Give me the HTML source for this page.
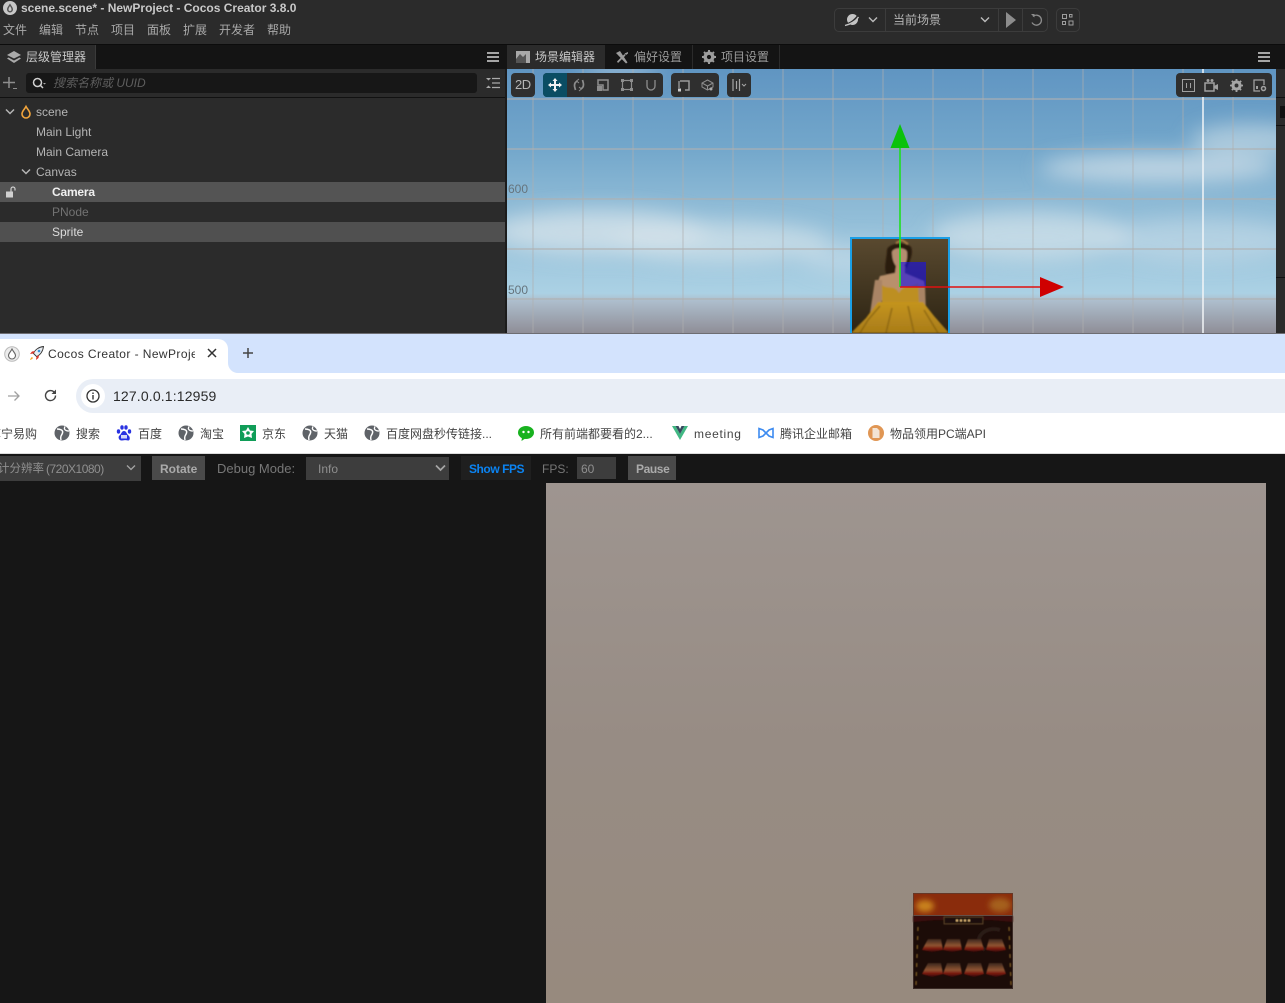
<!DOCTYPE html>
<html><head><meta charset="utf-8"><title>Cocos Creator</title>
<style>
*{box-sizing:border-box}
html,body{margin:0;padding:0;width:1285px;height:1003px;overflow:hidden;background:#161616}
body{position:relative;font-family:"Liberation Sans","Noto Sans CJK SC",sans-serif;font-size:12px}
.a{position:absolute}
.t{position:absolute;white-space:nowrap;line-height:16px}
svg{position:absolute;overflow:visible}
svg.clip{overflow:hidden}
.m{color:#a8a8a8;top:22px}
.r{color:#b5b5b5;left:36px}
.b{color:#444;top:426px;font-size:12px;letter-spacing:0}
.tb{position:absolute;top:73px;height:24px;background:#2f2f2f;border-radius:4px}
</style></head><body>

<!-- editor -->
<div class="a" style="left:0;top:0;width:1285px;height:44px;background:#2b2b2b"></div>
<div class="a" style="left:0;top:44px;width:1285px;height:1px;background:#0c0c0c"></div>
<svg style="left:3px;top:1px" width="14" height="14" viewBox="0 0 14 14"><circle cx="7" cy="7" r="7" fill="#c8c8c8"/><path d="M7 2.500C5.500 5 4 6.500 4 8.500a3 3 0 0 0 6 0C10 6.500 8.500 5 7 2.500z" fill="#555"/><path d="M7 5C6.200 6.500 5.500 7.300 5.500 8.500a1.500 1.500 0 0 0 3 0C8.500 7.300 7.800 6.500 7 5z" fill="#ccc"/></svg>
<div class="t" style="left:21px;top:0;color:#c9c9c9;font-weight:bold">scene.scene* - NewProject - Cocos Creator 3.8.0</div>
<div class="t m" style="left:3px">文件</div><div class="t m" style="left:39px">编辑</div><div class="t m" style="left:75px">节点</div><div class="t m" style="left:111px">项目</div><div class="t m" style="left:147px">面板</div><div class="t m" style="left:183px">扩展</div><div class="t m" style="left:219px">开发者</div><div class="t m" style="left:267px">帮助</div>

<!-- top center toolbar -->
<div class="a" style="left:834px;top:8px;width:214px;height:24px;border:1px solid #3c3c3c;border-radius:5px;background:#2a2a2a"></div>
<div class="a" style="left:885px;top:9px;width:1px;height:22px;background:#3c3c3c"></div>
<div class="a" style="left:998px;top:9px;width:1px;height:22px;background:#3c3c3c"></div>
<div class="a" style="left:1022px;top:9px;width:1px;height:22px;background:#3c3c3c"></div>
<div class="a" style="left:1056px;top:8px;width:24px;height:24px;border:1px solid #3c3c3c;border-radius:5px"></div>
<svg style="left:844px;top:12px" width="16" height="16" viewBox="0 0 16 16"><circle cx="8.500" cy="7.500" r="5.500" fill="#c4c4c4"/><path d="M1 13C6 12 12 8 15 2.500" stroke="#2a2a2a" stroke-width="2.400" fill="none"/><path d="M1 13.500C6 12.500 12 9 14.500 5" stroke="#c4c4c4" stroke-width="1.400" fill="none"/></svg>
<svg style="left:868px;top:16px" width="10" height="8" viewBox="0 0 10 8"><path d="M1 1.500L5 5.500L9 1.500" stroke="#bbb" stroke-width="1.400" fill="none"/></svg>
<div class="t" style="left:893px;top:12px;color:#b5b5b5">当前场景</div>
<svg style="left:980px;top:16px" width="10" height="8" viewBox="0 0 10 8"><path d="M1 1.500L5 5.500L9 1.500" stroke="#bbb" stroke-width="1.400" fill="none"/></svg>
<svg style="left:1005px;top:12px" width="12" height="16" viewBox="0 0 12 16"><path d="M1 0L11 8L1 16z" fill="#8c8c8c"/></svg>
<svg style="left:1029px;top:13px" width="14" height="14" viewBox="0 0 14 14"><path d="M4 3.500A5 5 0 1 1 3 9.500" stroke="#8c8c8c" stroke-width="1.300" fill="none"/><path d="M2 1L5.500 1L5.500 4.500z" fill="#8c8c8c"/></svg>
<svg style="left:1062px;top:14px" width="12" height="12" viewBox="0 0 12 12" fill="none" stroke="#9c9c9c"><rect x=".5" y=".5" width="4" height="4"/><rect x="7.500" y=".5" width="2.500" height="2.500"/><rect x=".5" y="7.500" width="3" height="3"/><rect x="7" y="7" width="4" height="4"/></svg>

<!-- hierarchy -->
<div class="a" style="left:0;top:45px;width:505px;height:288px;background:#2b2b2b"></div>
<div class="a" style="left:0;top:45px;width:505px;height:24px;background:#141414"></div>
<div class="a" style="left:0;top:45px;width:96px;height:24px;background:#2b2b2b;border-right:1px solid #3a3a3a"></div>
<svg style="left:7px;top:50px" width="14" height="14" viewBox="0 0 14 14"><path d="M7 1L14 5L7 8.500L0 5z" fill="#aaa"/><path d="M1.500 7.500L0 8.500L7 13L14 8.500L12.500 7.500L7 10.500z" fill="#aaa"/></svg>
<div class="t" style="left:26px;top:49px;color:#c6c6c6">层级管理器</div>
<div class="a" style="left:487px;top:52px;width:12px;height:10px;border-top:2px solid #a5a5a5;border-bottom:2px solid #a5a5a5"></div>
<div class="a" style="left:487px;top:56px;width:12px;height:2px;background:#a5a5a5"></div>
<div class="a" style="left:0;top:97px;width:505px;height:1px;background:#111"></div>
<svg style="left:3px;top:76px" width="14" height="14" viewBox="0 0 14 14"><path d="M6 1v11M0 6.500h12" stroke="#8e8e8e" stroke-width="1.500" fill="none"/><path d="M10 13h4v-1h-4z" fill="#8e8e8e"/></svg>
<div class="a" style="left:26px;top:73px;width:451px;height:20px;background:#171717;border-radius:3px"></div>
<svg style="left:32px;top:77px" width="14" height="12" viewBox="0 0 14 12"><circle cx="5.500" cy="5.500" r="4" stroke="#d0d0d0" stroke-width="1.500" fill="none"/><path d="M8.500 8.500L11 11" stroke="#d0d0d0" stroke-width="1.500"/><path d="M11 6h3l-1.500 1.500z" fill="#aaa"/></svg>
<div class="t" style="left:53px;top:75px;color:#5e5e5e;font-style:italic">搜索名称或 UUID</div>
<svg style="left:486px;top:77px" width="14" height="12" viewBox="0 0 14 12"><path d="M0 1h5L2.500 3.500zM0 11h5L2.500 8.500z" fill="#aaa"/><path d="M6 1.500h8M6 6h8M6 10.500h8" stroke="#aaa" stroke-width="1.200"/></svg>

<svg style="left:5px;top:108px" width="10" height="8" viewBox="0 0 10 8"><path d="M1 1.500L5 5.500L9 1.500" stroke="#b5b5b5" stroke-width="1.500" fill="none"/></svg>
<svg style="left:20px;top:105px" width="12" height="14" viewBox="0 0 12 14"><path d="M6 1.500C4.500 4.500 2 6 2 9a4 4 0 0 0 8 0C10 6 7.500 4.500 6 1.500z" stroke="#f2a53c" stroke-width="1.600" fill="none"/></svg>
<div class="t r" style="top:104px">scene</div>
<div class="t r" style="top:124px">Main Light</div>
<div class="t r" style="top:144px">Main Camera</div>
<svg style="left:21px;top:168px" width="10" height="8" viewBox="0 0 10 8"><path d="M1 1.500L5 5.500L9 1.500" stroke="#b5b5b5" stroke-width="1.500" fill="none"/></svg>
<div class="t r" style="top:164px">Canvas</div>
<div class="a" style="left:0;top:182px;width:505px;height:20px;background:#545454"></div>
<svg style="left:5px;top:186px" width="12" height="12" viewBox="0 0 12 12"><rect x="1" y="5.500" width="7" height="6" fill="#d0d0d0"/><path d="M6 5.500V3a2 2 0 0 1 4 0v1.500" stroke="#d0d0d0" stroke-width="1.200" fill="none"/></svg>
<div class="t" style="left:52px;top:184px;color:#f0f0f0;font-weight:bold;letter-spacing:-.2px">Camera</div>
<div class="t" style="left:52px;top:204px;color:#727272">PNode</div>
<div class="a" style="left:0;top:222px;width:505px;height:20px;background:#505050"></div>
<div class="t" style="left:52px;top:224px;color:#dcdcdc">Sprite</div>

<!-- scene right -->
<div class="a" style="left:505px;top:45px;width:780px;height:24px;background:#141414"></div>
<div class="a" style="left:507px;top:45px;width:98px;height:24px;background:#2b2b2b"></div>
<div class="a" style="left:692px;top:45px;width:1px;height:24px;background:#2b2b2b"></div>
<div class="a" style="left:779px;top:45px;width:1px;height:24px;background:#2b2b2b"></div>
<svg style="left:516px;top:51px" width="14" height="12" viewBox="0 0 14 12"><rect width="14" height="12" fill="#a8a8a8"/><path d="M0 8L4 3L7 6L10 3V12H0z" fill="#555"/></svg>
<div class="t" style="left:535px;top:49px;color:#c8c8c8">场景编辑器</div>
<svg style="left:615px;top:50px" width="14" height="14" viewBox="0 0 14 14"><path d="M1 3L5 1L12.500 12.500L11 13.500z" fill="#9c9c9c"/><path d="M13 2L9.500 3.500L11 5L13 3.500M9.500 4L2 11.500L3 13L10.500 5.500" fill="#9c9c9c"/></svg>
<div class="t" style="left:634px;top:49px;color:#9c9c9c">偏好设置</div>
<svg style="left:702px;top:50px" width="14" height="14" viewBox="0 0 14 14"><circle cx="7" cy="7" r="3.800" fill="none" stroke="#9c9c9c" stroke-width="3.400"/><path d="M7 0v14M0 7h14M2 2l10 10M12 2L2 12" stroke="#9c9c9c" stroke-width="2" stroke-dasharray="2 10"/></svg>
<div class="t" style="left:721px;top:49px;color:#9c9c9c">项目设置</div>
<div class="a" style="left:1258px;top:52px;width:12px;height:10px;border-top:2px solid #a5a5a5;border-bottom:2px solid #a5a5a5"></div>
<div class="a" style="left:1258px;top:56px;width:12px;height:2px;background:#a5a5a5"></div>

<!-- viewport -->
<svg class="clip" style="left:507px;top:69px" width="769" height="264" viewBox="507 69 769 264">
<defs>
<linearGradient id="sky" x1="0" y1="0" x2="0" y2="1"><stop offset="0" stop-color="#6095c2"/><stop offset=".3" stop-color="#73a7cb"/><stop offset=".5" stop-color="#8cb9d5"/><stop offset=".85" stop-color="#abd1e4"/><stop offset=".875" stop-color="#aebfce"/><stop offset="1" stop-color="#8f8e97"/></linearGradient>
<filter id="bl" x="-30%" y="-80%" width="160%" height="260%"><feGaussianBlur stdDeviation="10"/></filter>
<filter id="soft"><feGaussianBlur stdDeviation=".7"/></filter>
<linearGradient id="sk" x1="0" y1="0" x2="0" y2="1"><stop offset="0" stop-color="#5a4a30"/><stop offset="1" stop-color="#2d2413"/></linearGradient>
<linearGradient id="dr" x1="0" y1="0" x2="0" y2="1"><stop offset="0" stop-color="#c4941e"/><stop offset="1" stop-color="#a97c18"/></linearGradient>
</defs>
<rect x="507" y="69" width="769" height="264" fill="url(#sky)"/>
<g filter="url(#bl)" fill="#d4e2ea">
<ellipse cx="600" cy="232" rx="110" ry="22" opacity=".8"/>
<ellipse cx="720" cy="242" rx="110" ry="20" opacity=".7"/>
<ellipse cx="1160" cy="168" rx="120" ry="14" opacity=".75"/>
<ellipse cx="1250" cy="140" rx="60" ry="16" opacity=".6"/>
<ellipse cx="1030" cy="236" rx="100" ry="24" opacity=".7"/>
<ellipse cx="1200" cy="240" rx="100" ry="22" opacity=".45"/>
<ellipse cx="860" cy="258" rx="60" ry="16" opacity=".45"/>
<ellipse cx="620" cy="70" rx="40" ry="6" opacity=".7"/>
</g>
<g stroke="#b0b0b0">
<path d="M533 69V333M583 69V333M633 69V333M683 69V333M733 69V333M783 69V333M833 69V333M883 69V333M933 69V333M983 69V333M1033 69V333M1083 69V333M1133 69V333M1183 69V333M1233 69V333" stroke-opacity=".5" stroke-width="1.400"/>
<path d="M507 99H1276M507 149H1276M507 199H1276M507 249H1276M507 299H1276" stroke-width="1.500" stroke-opacity=".75"/>
</g>
<path d="M1203 69V333" stroke="#f2f5f7" stroke-width="1.500"/>

<!-- portrait -->
<rect x="850" y="237" width="100" height="96" fill="url(#sk)"/>
<g filter="url(#soft)">
<path d="M887 250C888 243 906 241 911 247C914 254 909 262 907 268H897C898 275 893 281 887 276C883 268 887 258 887 250z" fill="#2a1a10"/>
<path d="M892 252C893 247 906 247 907 252C908 262 904 268 900 268C896 268 892 262 892 252z" fill="#b48e70"/>
<path d="M896 266H905V273L924 281L925 288H915L912 296H890L884 288L875 290L880 276L895 273z" fill="#b8906c"/>
<path d="M875 280L882 280L882 300L876 320L869 320z" fill="#a98465"/>
<path d="M916 285L925 285L926 314L916 326L909 322L916 312z" fill="#a98465"/>
<path d="M882 285C888 290 894 284 899 293C904 284 910 288 918 283L919 303H882z" fill="#bd8f22"/>
<path d="M878 302H923L934 316L949 333H851L866 318z" fill="url(#dr)"/>
<path d="M880 306L868 320L860 333M892 308L886 333M908 306L914 333M924 310L938 333" stroke="#84600f" stroke-width="1.600" fill="none" opacity=".75"/>
<path d="M896 243L902 240L908 244" stroke="#a77c44" stroke-width="2" fill="none"/>
</g>
<path d="M851 333V238H949V333" fill="none" stroke="#1a9fe6" stroke-width="2"/>

<!-- gizmos -->
<rect x="900" y="262" width="26" height="25" fill="#1a10e6" opacity=".62"/>
<path d="M900 148V287" stroke="#1fe01f" stroke-width="1.600"/>
<path d="M900 124L909.500 148H890.500z" fill="#0cc20c"/>
<path d="M900 287H1042" stroke="#e01010" stroke-width="1.600"/>
<path d="M1040 277L1064 287L1040 297z" fill="#cf0000"/>
</svg>
<div class="t" style="left:508px;top:181px;color:#66747d">600</div>
<div class="t" style="left:508px;top:282px;color:#66747d">500</div>

<!-- viewport toolbar -->
<div class="tb" style="left:511px;width:24px"></div>
<div class="t" style="left:515px;top:77px;color:#b5b5b5;font-size:13px;letter-spacing:-.5px">2D</div>
<div class="tb" style="left:543px;width:120px"></div>
<div class="a" style="left:543px;top:73px;width:24px;height:24px;background:#0a4d63;border-radius:4px 0 0 4px"></div>
<svg style="left:548px;top:78px" width="14" height="14" viewBox="0 0 14 14"><path d="M7 0L9.500 3H8V6H11V4.500L14 7L11 9.500V8H8V11H9.500L7 14L4.500 11H6V8H3V9.500L0 7L3 4.500V6H6V3H4.500z" fill="#f2f2f2"/></svg>
<svg style="left:572px;top:78px" width="14" height="14" viewBox="0 0 14 14" fill="none" stroke="#8d8d8d" stroke-width="1.700"><path d="M5.500 3C3 4 2.500 6 2.500 7.500S3 10 3.500 12"/><path d="M8.500 11C11 10 11.500 8 11.500 6.500S11 4 10.500 2"/><path d="M7 1L4.500 3L7 5M7 9L9.500 11L7 13" stroke-width="1"/></svg>
<svg style="left:597px;top:79px" width="12" height="12" viewBox="0 0 12 12"><path d="M1 1H11V11H6V6H1z" fill="none" stroke="#8d8d8d" stroke-width="1.500"/><rect x="0" y="7" width="5" height="5" fill="#8d8d8d"/></svg>
<svg style="left:621px;top:79px" width="12" height="12" viewBox="0 0 12 12"><rect x="1.500" y="1.500" width="9" height="9" fill="none" stroke="#8d8d8d" stroke-width="1.200"/><path d="M0 0h3v3H0zM9 0h3v3H9zM0 9h3v3H0zM9 9h3v3H9z" fill="#8d8d8d"/></svg>
<svg style="left:645px;top:79px" width="12" height="13" viewBox="0 0 12 13"><path d="M2 1V7a4 4 0 0 0 8 0V1" fill="none" stroke="#8d8d8d" stroke-width="1.300"/></svg>
<div class="tb" style="left:671px;width:48px"></div>
<svg style="left:677px;top:79px" width="13" height="13" viewBox="0 0 13 13"><path d="M3 2H12V11H8" fill="none" stroke="#9c9c9c" stroke-width="1.500"/><path d="M2 2V9" stroke="#9c9c9c" stroke-width="1.300"/><rect x="1" y="9.500" width="3" height="3" fill="#ccc"/></svg>
<svg style="left:701px;top:79px" width="13" height="13" viewBox="0 0 13 13" fill="none" stroke="#8d8d8d"><path d="M6.500 1L12 4V8L6.500 11L1 8V4zM1 4L6.500 7L12 4M6.500 7V11"/><circle cx="10" cy="10" r="1.500" fill="#aaa" stroke="none"/></svg>
<div class="tb" style="left:727px;width:24px"></div>
<svg style="left:732px;top:79px" width="15" height="12" viewBox="0 0 15 12"><path d="M1 0V12M4.500 2V10M7.500 0V12" stroke="#a5a5a5" stroke-width="1.200"/><path d="M10 5L12 7L14 5" stroke="#a5a5a5" fill="none"/></svg>
<div class="tb" style="left:1176px;width:96px"></div>
<svg style="left:1182px;top:79px" width="13" height="13" viewBox="0 0 13 13"><rect x=".5" y=".5" width="12" height="12" fill="none" stroke="#a0a0a0"/><path d="M4.500 4v5M8.500 4v5" stroke="#a0a0a0"/></svg>
<svg style="left:1205px;top:78px" width="13" height="14" viewBox="0 0 13 14"><rect x="0" y="5" width="9" height="8" fill="none" stroke="#a0a0a0" stroke-width="1.500"/><circle cx="3" cy="2.500" r="1.500" fill="#a0a0a0"/><circle cx="7" cy="2.500" r="1.500" fill="#a0a0a0"/><path d="M9 8L13 6V12L9 10z" fill="#a0a0a0"/></svg>
<svg style="left:1230px;top:79px" width="13" height="13" viewBox="0 0 14 14"><circle cx="7" cy="7" r="3.800" fill="none" stroke="#a5a5a5" stroke-width="3.400"/><path d="M7 0v14M0 7h14M2 2l10 10M12 2L2 12" stroke="#a5a5a5" stroke-width="2" stroke-dasharray="2 10"/></svg>
<svg style="left:1253px;top:79px" width="14" height="13" viewBox="0 0 14 13"><path d="M7 12H1V1H11V6" fill="none" stroke="#a0a0a0" stroke-width="1.300"/><circle cx="10.500" cy="9.500" r="2" fill="none" stroke="#a0a0a0" stroke-width="1.500"/><rect x="3" y="7" width="2" height="3" fill="#a0a0a0"/></svg>

<!-- right strip -->
<div class="a" style="left:505px;top:69px;width:2px;height:264px;background:#1c1c1c"></div>
<div class="a" style="left:1276px;top:69px;width:9px;height:264px;background:#2b2b2b"></div>
<div class="a" style="left:1276px;top:97px;width:9px;height:1px;background:#111"></div>
<div class="a" style="left:1276px;top:125px;width:9px;height:1px;background:#111"></div>
<div class="a" style="left:1276px;top:277px;width:9px;height:1px;background:#111"></div>
<div class="a" style="left:1280px;top:106px;width:5px;height:12px;background:#111"></div>
<div class="a" style="left:0;top:333px;width:1285px;height:1px;background:#6d6d72"></div>

<!-- browser -->
<div class="a" style="left:0;top:334px;width:1285px;height:39px;background:#d3e3fd"></div>
<div class="a" style="left:0;top:373px;width:1285px;height:81px;background:#fff"></div>
<div class="a" style="left:0;top:339px;width:228px;height:34px;background:#fff;border-radius:0 10px 0 0"></div>
<svg style="left:228px;top:363px" width="10" height="10" viewBox="0 0 10 10"><path d="M0 0V10H10A10 10 0 0 1 0 0z" fill="#fff"/></svg>
<svg style="left:4px;top:346px" width="16" height="16" viewBox="0 0 16 16"><circle cx="8" cy="8" r="7.300" fill="#ececec" stroke="#bbb"/><path d="M8 3C6.500 6 4.500 7.500 4.500 9.500a3.500 3.500 0 0 0 7 0C11.500 7.500 9.500 6 8 3z" fill="#fff" stroke="#666" stroke-width="1.100"/></svg>
<svg style="left:29px;top:346px" width="15" height="15" viewBox="0 0 15 15"><path d="M14.500 .5C10 1 6 3.500 4.500 7.500L7.500 10.500C11.500 9 14 5 14.500 .5z" fill="#e9edf2" stroke="#333" stroke-width=".9"/><circle cx="10" cy="5" r="1.300" fill="#3a8fd8"/><path d="M4.500 7.500L1 8L3 5.500L6 5M7.500 10.500L7 14L9.500 12L10 9" fill="#d9352b"/><path d="M3 11C1.500 12 1 14 1 14S3 13.500 4 12z" fill="#f5a623"/></svg>
<div class="t" style="left:48px;top:346px;width:147px;overflow:hidden;color:#333;letter-spacing:.42px">Cocos Creator - NewProje</div>
<svg style="left:207px;top:348px" width="10" height="10" viewBox="0 0 10 10"><path d="M1 1L9 9M9 1L1 9" stroke="#333" stroke-width="1.500"/></svg>
<svg style="left:243px;top:348px" width="10" height="10" viewBox="0 0 10 10"><path d="M5 0V10M0 5H10" stroke="#444" stroke-width="1.500"/></svg>
<svg style="left:8px;top:390px" width="12" height="12" viewBox="0 0 12 12"><path d="M0 6H11M6.500 1.500L11 6L6.500 10.500" stroke="#a0a0a0" stroke-width="1.300" fill="none"/></svg>
<svg style="left:44px;top:389px" width="13" height="13" viewBox="0 0 13 13"><path d="M11.500 6.500A5 5 0 1 1 10 3" stroke="#444" stroke-width="1.400" fill="none"/><path d="M12 .5V5H7.500z" fill="#444"/></svg>
<div class="a" style="left:76px;top:379px;width:1209px;height:34px;background:#e9eef6;border-radius:17px 0 0 17px"></div>
<div class="a" style="left:81px;top:384px;width:24px;height:24px;background:#fff;border-radius:50%"></div>
<svg style="left:86px;top:389px" width="14" height="14" viewBox="0 0 14 14"><circle cx="7" cy="7" r="6" fill="none" stroke="#333" stroke-width="1.300"/><path d="M7 6V10.500M7 3.500V5" stroke="#333" stroke-width="1.400"/></svg>
<div class="t" style="left:113px;top:388px;color:#2a2a2a;font-size:14px;letter-spacing:.15px">127.0.0.1:12959</div>

<!-- bookmarks -->
<div class="t b" style="left:-11px">苏宁易购</div>
<svg width="0" height="0"><defs><g id="gl"><circle cx="8" cy="8" r="7.500" fill="#5f6368"/><path d="M3 4C6 4 9.500 5 8.500 8S6 11 7 15" stroke="#fff" stroke-width="1.500" fill="none"/><path d="M11 1.500C9.500 4 11 6 15 6" stroke="#fff" stroke-width="1.300" fill="none"/></g></defs></svg>
<svg style="left:54px;top:425px" width="16" height="16" viewBox="0 0 16 16"><use href="#gl"/></svg>
<div class="t b" style="left:76px">搜索</div>
<svg style="left:116px;top:425px" width="16" height="16" viewBox="0 0 16 16" fill="#2932e1"><ellipse cx="2.500" cy="6.500" rx="1.700" ry="2.200"/><ellipse cx="6" cy="2.500" rx="1.700" ry="2.200"/><ellipse cx="10" cy="2.500" rx="1.700" ry="2.200"/><ellipse cx="13.500" cy="6.500" rx="1.700" ry="2.200"/><path d="M8 6C5.500 6 5.500 9 3.500 10.500S3 16 6 15.500 10 15 12 15.500 14.500 12 12.500 10.500 10.500 6 8 6z"/><rect x="5" y="10" width="6" height="3.500" fill="#fff" opacity=".8"/></svg>
<div class="t b" style="left:138px">百度</div>
<svg style="left:178px;top:425px" width="16" height="16" viewBox="0 0 16 16"><use href="#gl"/></svg>
<div class="t b" style="left:200px">淘宝</div>
<svg style="left:240px;top:425px" width="16" height="16" viewBox="0 0 16 16"><rect width="16" height="16" fill="#109d58"/><path d="M8 2L10 5.500L14 6L11.500 9L12 13L8 11.500L4 13L4.500 9L2 6L6 5.500z" fill="#fff"/><circle cx="8" cy="8" r="1.800" fill="#109d58"/></svg>
<div class="t b" style="left:262px">京东</div>
<svg style="left:302px;top:425px" width="16" height="16" viewBox="0 0 16 16"><use href="#gl"/></svg>
<div class="t b" style="left:324px">天猫</div>
<svg style="left:364px;top:425px" width="16" height="16" viewBox="0 0 16 16"><use href="#gl"/></svg>
<div class="t b" style="left:386px">百度网盘秒传链接...</div>
<svg style="left:518px;top:425px" width="16" height="16" viewBox="0 0 16 16"><ellipse cx="8" cy="7.500" rx="8" ry="6.500" fill="#18b21f"/><path d="M4 12L3.500 16L8 13z" fill="#18b21f"/><circle cx="5.500" cy="7" r="1.200" fill="#fff"/><circle cx="10.500" cy="7" r="1.200" fill="#fff"/></svg>
<div class="t b" style="left:540px">所有前端都要看的2...</div>
<svg style="left:672px;top:426px" width="16" height="14" viewBox="0 0 16 14"><path d="M0 0H3.500L8 8L12.500 0H16L8 14z" fill="#41b883"/><path d="M3.500 0H6.500L8 3L9.500 0H12.500L8 8z" fill="#35495e"/></svg>
<div class="t b" style="left:694px;letter-spacing:.7px">meeting</div>
<svg style="left:758px;top:427px" width="16" height="12" viewBox="0 0 16 12"><path d="M1 1.500V10.500L5 9L8 6L5 3zM15 1.500V10.500L11 9L8 6L11 3z" fill="none" stroke="#3d8bf0" stroke-width="1.600"/></svg>
<div class="t b" style="left:780px">腾讯企业邮箱</div>
<svg style="left:868px;top:425px" width="16" height="16" viewBox="0 0 16 16"><circle cx="8" cy="8" r="8" fill="#e09654"/><path d="M4.500 3H9L11.500 5.500V13H4.500z" fill="#f3e4d4"/></svg>
<div class="t b" style="left:890px">物品领用PC端API</div>
<div class="a" style="left:0;top:453px;width:1285px;height:1px;background:#dcdcdc"></div>

<!-- preview page -->
<div class="a" style="left:0;top:454px;width:1285px;height:549px;background:#161616"></div>
<div class="a" style="left:0;top:456px;width:141px;height:25px;background:#3d3d3d"></div>
<div class="t" style="left:-2px;top:461px;color:#8f8f8f;font-size:11.500px">计分辨率</div>
<div class="t" style="left:46px;top:461px;color:#8f8f8f;letter-spacing:-.5px">(720X1080)</div>
<svg style="left:126px;top:464px" width="10" height="8" viewBox="0 0 10 8"><path d="M1 1.500L5 5.500L9 1.500" stroke="#a5a5a5" stroke-width="1.300" fill="none"/></svg>
<div class="a" style="left:152px;top:456px;width:53px;height:24px;background:#4a4a4a"></div>
<div class="t" style="left:160px;top:461px;color:#aaa;font-weight:bold;font-size:12px">Rotate</div>
<div class="t" style="left:217px;top:461px;color:#777;font-size:13px">Debug Mode:</div>
<div class="a" style="left:306px;top:457px;width:143px;height:23px;background:#3d3d3d"></div>
<div class="t" style="left:318px;top:461px;color:#8f8f8f">Info</div>
<svg style="left:435px;top:464px" width="11" height="8" viewBox="0 0 11 8"><path d="M1 1.500L5.500 6L10 1.500" stroke="#a5a5a5" stroke-width="1.700" fill="none"/></svg>
<div class="a" style="left:461px;top:456px;width:70px;height:24px;background:#1f1f1f"></div>
<div class="t" style="left:469px;top:461px;color:#0b84f3;font-weight:bold;letter-spacing:-.45px">Show FPS</div>
<div class="t" style="left:542px;top:461px;color:#777;font-size:12px">FPS:</div>
<div class="a" style="left:577px;top:457px;width:39px;height:22px;background:#3d3d3d"></div>
<div class="t" style="left:581px;top:461px;color:#8f8f8f">60</div>
<div class="a" style="left:628px;top:456px;width:48px;height:24px;background:#4a4a4a"></div>
<div class="t" style="left:636px;top:461px;color:#aaa;font-weight:bold;letter-spacing:-.4px">Pause</div>

<!-- game canvas -->
<svg class="clip" style="left:546px;top:483px" width="720" height="520" viewBox="546 483 720 520">
<defs>
<linearGradient id="cv" x1="0" y1="0" x2="0" y2="1"><stop offset="0" stop-color="#9e9590"/><stop offset=".5" stop-color="#978c84"/><stop offset="1" stop-color="#978a7e"/></linearGradient>
<linearGradient id="sh" x1="0" y1="0" x2="0" y2="1"><stop offset="0" stop-color="#3a261e"/><stop offset=".5" stop-color="#8f5532"/><stop offset=".75" stop-color="#7a1a0e"/><stop offset="1" stop-color="#300806"/></linearGradient>
<filter id="s2" x="-50%" y="-50%" width="200%" height="200%"><feGaussianBlur stdDeviation="3"/></filter>
<filter id="s1"><feGaussianBlur stdDeviation=".5"/></filter>
</defs>
<rect x="546" y="483" width="720" height="520" fill="url(#cv)"/>
<rect x="913" y="893" width="100" height="96" fill="#1c0c08"/>
<svg x="913" y="893" width="100" height="22" viewBox="913 893 100 22">
<rect x="913" y="893" width="100" height="22" fill="#8a2c0c"/>
<g filter="url(#s2)"><ellipse cx="925" cy="906" rx="9" ry="6" fill="#c9821c"/><ellipse cx="1000" cy="905" rx="11" ry="7" fill="#a5611a"/></g>
</svg>
<rect x="913" y="915" width="100" height="1" fill="#6d6056"/>
<g filter="url(#s1)">
<path d="M913 916H1013V922L990 920H936L913 922z" fill="#3a0d0a"/>
<rect x="944" y="917" width="39" height="7" fill="#1e110c" stroke="#6b5030" stroke-width=".7"/>
<path d="M956 920.500h14" stroke="#d8b070" stroke-width="2" stroke-dasharray="2 2"/>
<path d="M1000 930C985 925 970 940 985 950" stroke="#2a1a15" stroke-width="4" fill="none"/>
<g fill="url(#sh)">
<path d="M922 950L928 939H941L943 950L932 952z"/><path d="M943 950L947 939H960L962 950L952 952z"/><path d="M964 950L968 939H981L984 950L974 952z"/><path d="M986 950L989 939H1002L1006 950L996 952z"/>
<path d="M922 974L928 963H941L943 974L932 977z"/><path d="M943 974L947 963H960L962 974L952 977z"/><path d="M964 974L968 963H981L984 974L974 977z"/><path d="M986 974L989 963H1002L1006 974L996 977z"/>
</g>
<path d="M918 927L916 985M1009 927L1011 985" stroke="#7c5a20" stroke-width="1.300" stroke-dasharray="4 5" fill="none"/>
</g>
<rect x="913.500" y="893.500" width="99" height="95" fill="none" stroke="#4e4038" stroke-opacity=".6"/>
</svg>
</body></html>
